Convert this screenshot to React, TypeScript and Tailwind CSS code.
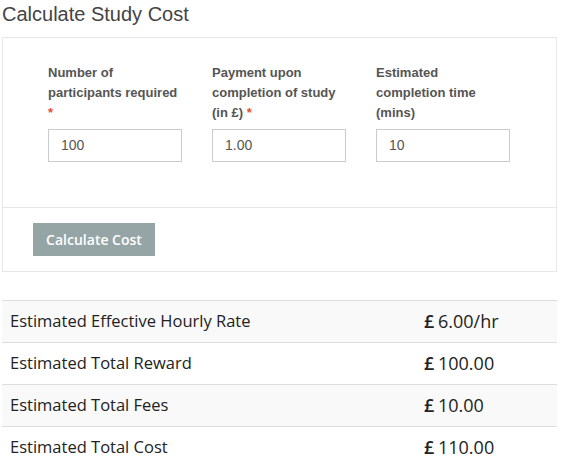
import React from "react";

const rows = [
  ["Estimated Effective Hourly Rate", "6.00/hr"],
  ["Estimated Total Reward", "100.00"],
  ["Estimated Total Fees", "10.00"],
  ["Estimated Total Cost", "110.00"],
];

function Field({ label, req, value }: { label: React.ReactNode; req?: boolean; value: string }) {
  return (
    <div className="w-[134px] flex flex-col">
      <div className="h-[60px] text-[13px] leading-[20px] font-bold text-[#555]" style={{ fontFamily: '"Liberation Sans", Arial, sans-serif' }}>
        {label}
        {req && <span className="text-[#e74c3c]"> *</span>}
      </div>
      <div className="mt-[6px] h-[33px] border border-[#ccc] pl-[12px] flex items-center text-[14px] text-[#555]" style={{ fontFamily: '"Liberation Sans", Arial, sans-serif' }}>
        {value}
      </div>
    </div>
  );
}

export default function App() {
  return (
    <div className="w-[569px] h-[475px] bg-white" style={{ fontFamily: '"Liberation Sans", Arial, sans-serif' }}>
      <div className="h-[37px] pl-[2px] pt-[1px] text-[20px] leading-[26px] text-[#444]">Calculate Study Cost</div>
      <div className="ml-[2px] w-[555px] border border-[#e7e7e7]">
        <div className="pt-[25px] pl-[45px] pb-[45px] flex gap-[30px]">
          <Field label={<>Number of<br />participants required<br /></>} req value="100" />
          <Field label={<>Payment upon<br />completion of study<br />(in £)</>} req value="1.00" />
          <Field label={<>Estimated<br />completion time<br />(mins)</>} value="10" />
        </div>
        <div className="border-t border-[#e7e7e7] py-[15px] pl-[30px]">
          <div className="w-[122px] h-[33px] bg-[#95a5a6] text-white text-[14px] font-semibold flex items-center justify-center" style={{ fontFamily: '"Open Sans", sans-serif' }}>
            Calculate Cost
          </div>
        </div>
      </div>
      <div className="mt-[28px] ml-[2px] w-[555px]" style={{ fontFamily: '"Open Sans", sans-serif' }}>
        {rows.map(([k, v], i) => (
          <div key={k} className={`flex h-[42px] items-center border-t border-[#ddd] text-[#222] ${i % 2 === 0 ? "bg-[#f9f9f9]" : "bg-white"}`}>
            <div className="pl-[8px] w-[422px] text-[16.5px]">{k}</div>
            <div className="text-[18px]">
              <span className="font-semibold mr-[-1px]">£</span> {v}
            </div>
          </div>
        ))}
      </div>
    </div>
  );
}
